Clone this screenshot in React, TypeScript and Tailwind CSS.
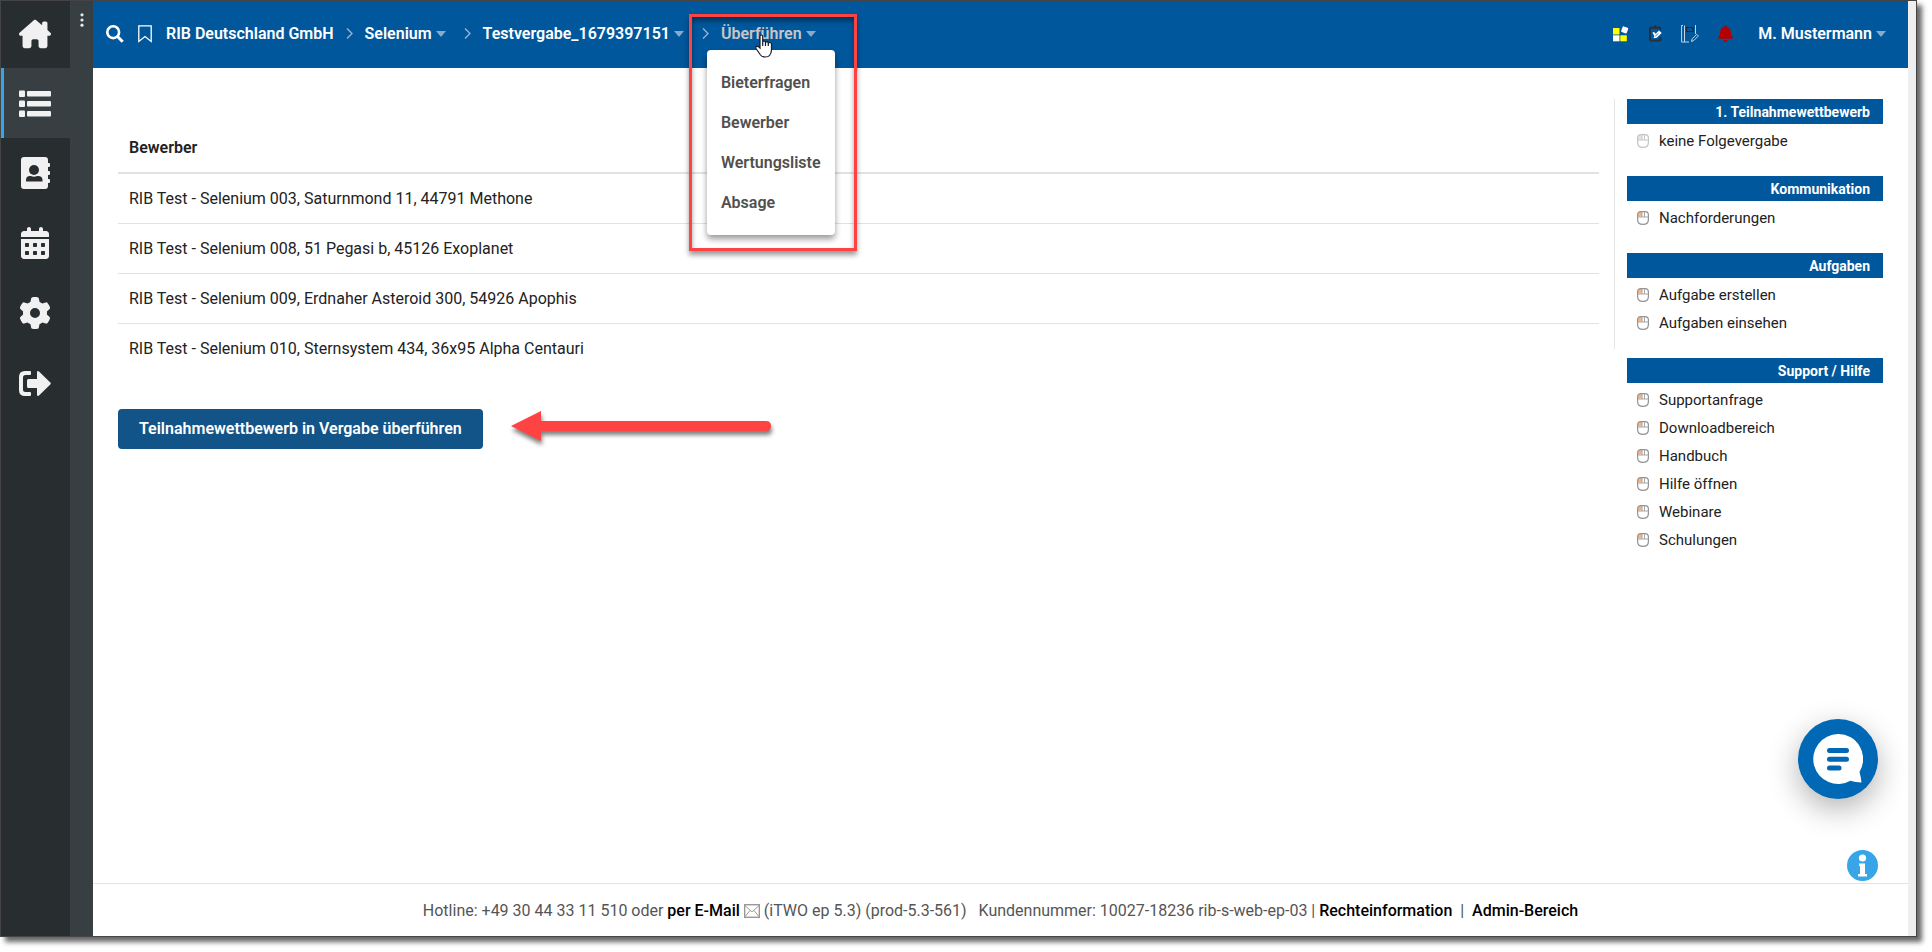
import type { ReactNode } from "react"
import {
  FaBell,
  FaHouseChimney,
  FaCalendarDays,
  FaGear,
} from "react-icons/fa6"

type LinkGroup = {
  title: string
  links: string[]
  muted?: boolean
}

const bidders = [
  "RIB Test - Selenium 003, Saturnmond 11, 44791 Methone",
  "RIB Test - Selenium 008, 51 Pegasi b, 45126 Exoplanet",
  "RIB Test - Selenium 009, Erdnaher Asteroid 300, 54926 Apophis",
  "RIB Test - Selenium 010, Sternsystem 434, 36x95 Alpha Centauri",
]

const menuItems = ["Bieterfragen", "Bewerber", "Wertungsliste", "Absage"]

const linkGroups: LinkGroup[] = [
  { title: "1. Teilnahmewettbewerb", links: ["keine Folgevergabe"], muted: true },
  { title: "Kommunikation", links: ["Nachforderungen"] },
  { title: "Aufgaben", links: ["Aufgabe erstellen", "Aufgaben einsehen"] },
  {
    title: "Support / Hilfe",
    links: [
      "Supportanfrage",
      "Downloadbereich",
      "Handbuch",
      "Hilfe öffnen",
      "Webinare",
      "Schulungen",
    ],
  },
]

function ListIcon() {
  return (
    <svg viewBox="0 0 32 28" className="h-7 w-8" fill="currentColor" aria-hidden="true">
      {[0, 10, 20].map((y) => (
        <g key={y}>
          <rect x="0" y={y + 0.5} width="6" height="6.5" rx="1" />
          <rect x="8" y={y + 1} width="24" height="5.5" rx="1" />
        </g>
      ))}
    </svg>
  )
}

function ContactIcon() {
  return (
    <svg viewBox="0 0 29 32" className="h-8 w-[29px]" aria-hidden="true">
      <rect width="27" height="32" rx="3" fill="currentColor" />
      <path d="M26 6h2q1 0 1 1v2q0 1-1 1h-2zM26 14h2q1 0 1 1v2q0 1-1 1h-2zM26 22h2q1 0 1 1v2q0 1-1 1h-2z" fill="currentColor" />
      <circle cx="13" cy="13" r="5" fill="#282d2f" />
      <path d="M5 24.5v-1.500q0-4 4-4h.8q3.200 1.400 6.400 0h.8q4.500 0 4.500 4v1.500z" fill="#282d2f" />
    </svg>
  )
}

function LogoutIcon() {
  return (
    <svg viewBox="0 0 32 25" className="h-[25px] w-8" fill="currentColor" aria-hidden="true">
      <path d="M11 0H6Q0 0 0 6v13q0 6 6 6h5q1 0 1-1v-2q0-1-1-1H6.500Q4 21 4 18.500v-12Q4 4 6.500 4H11q1 0 1-1V1q0-1-1-1z" />
      <path d="M18 1.300Q18 0 19 0q.6 0 1 .4l11.300 11.100q1 1 0 2L20 24.600q-.4.400-1 .4-1 0-1-1.300V17H9.500Q8 17 8 15.500v-6Q8 8 9.500 8H18z" />
    </svg>
  )
}

function Caret() {
  return (
    <svg viewBox="0 0 10 6" className="h-1.5 w-2.5" aria-hidden="true">
      <path d="M0 0h10L5 6z" fill="#86abd0" />
    </svg>
  )
}

function Separator() {
  return (
    <svg viewBox="0 0 7 11" className="h-[11px] w-[7px]" fill="none" aria-hidden="true">
      <path d="M1 .5l5 5-5 5" stroke="#8db0d2" strokeWidth="1.500" />
    </svg>
  )
}

function SearchIcon() {
  return (
    <svg viewBox="0 0 18 18" className="size-[18px]" fill="none" aria-hidden="true">
      <circle cx="7.200" cy="7.200" r="5.900" stroke="#fff" strokeWidth="2.600" />
      <path d="M11.500 11.500l5.200 5.200" stroke="#fff" strokeWidth="3" />
    </svg>
  )
}

function BookmarkIcon() {
  return (
    <svg viewBox="0 0 14 18" className="h-[18px] w-3.5" fill="none" aria-hidden="true">
      <path d="M.8.8h12.400v15.700L7 11.500.8 16.500z" stroke="#fff" strokeWidth="1.300" />
    </svg>
  )
}

function AppsIcon() {
  return (
    <svg viewBox="0 0 16 16" className="size-4" aria-hidden="true">
      <rect y="2" width="6.500" height="6.500" fill="#ff0" />
      <rect y="9.300" width="6.500" height="6" fill="#fff" />
      <rect x="7.300" y="9.300" width="6.500" height="6" fill="#ff0" />
      <rect x="8.700" y=".9" width="6" height="6" rx="1" fill="#fff" transform="rotate(20 11.700 3.900)" />
    </svg>
  )
}

function ClipboardIcon() {
  return (
    <svg viewBox="0 0 14 17" className="h-[17px] w-3.5" fill="none" aria-hidden="true">
      <path d="M4 2.500H2Q1 2.500 1 3.500V14.500Q1 15.500 2 15.500h8.500q1 0 1-1V12M8.500 2.500h2l1.500 2" stroke="#23303d" strokeWidth="1.900" />
      <path d="M3.500 4V2.500h1Q5 .3 6.300.3T8 2.500h1V4z" fill="#23303d" />
      <path d="M3.500 7.500L5 7l1.700 1.800L10 5.500l2.700 2.500-5 4.700-3 .6.500-2.600z" fill="#fff" />
      <path d="M6.200 11.500l2.800-3" stroke="#23303d" strokeWidth=".7" />
    </svg>
  )
}

function NotebookIcon() {
  return (
    <svg viewBox="0 0 18 18" className="size-[18px]" fill="none" stroke="#c3d5e6" aria-hidden="true">
      <path d="M.6.500v16.500M3.500.500v16.500M.5.500h1.500M.5 17H8M14.500 0v9" />
      <path d="M5.500 2.500h6.500v4H5.500z" stroke="#1d2c3b" strokeWidth="1.200" />
      <path d="M10.500 16.500l.7-2.600 4.600-4.600 1.600 1.600-4.600 4.600z" />
    </svg>
  )
}

function MouseIcon({ muted }: { muted?: boolean }) {
  return (
    <svg viewBox="0 0 12 14" className="h-3.5 w-3" fill="none" aria-hidden="true">
      <path d="M1 2.500Q1 1 2.500 1H5v4.500H1z" fill={muted ? "#e4e4e4" : "#ffb27a"} />
      <path d="M.6 4Q.6.6 4 .6h4q3.400 0 3.400 3.400v4.400q0 5-5.400 5t-5.400-5z" stroke={muted ? "#c4c4c4" : "#929292"} strokeWidth="1.200" />
      <path d="M.6 6h10.800M5 .6V6M7.500.6V6" stroke={muted ? "#c4c4c4" : "#a5a5a5"} />
    </svg>
  )
}

function MailIcon() {
  return (
    <svg viewBox="0 0 16 14" className="h-3.5 w-4" fill="none" stroke="#999" aria-hidden="true">
      <rect x=".7" y=".7" width="14.600" height="12.600" strokeWidth="1.400" />
      <path d="M1 1.500l7 6.500 7-6.500M1 12.500l5-6M15 12.500l-5-6" />
    </svg>
  )
}

function HandCursor() {
  return (
    <svg viewBox="0 0 18 24" className="pointer-events-none absolute top-[33px] left-[754px] z-30 h-6 w-[18px]" aria-hidden="true">
      <path
        d="M5 14V2.500Q5 1 6.300 1t1.400 1.500V8q.3-1 1.400-1t1.400 1.500q.3-.8 1.400-.8t1.400 1.500q.3-.7 1.400-.7 1.800 0 1.800 2V16q0 3-2 5.500-1 1.500-4.500 1.500-3 0-4.500-2L1 14.500Q.3 13 1.500 12.500T4 13z"
        fill="#fff"
        stroke="#1b1b2b"
        strokeWidth="1.200"
      />
      <path d="M7.700 8v4M10.500 8.500V12M13.300 9.500V12" stroke="#1b1b2b" strokeWidth="1.200" />
    </svg>
  )
}

function RailButton({
  label,
  active,
  children,
}: {
  label: string
  active?: boolean
  children: ReactNode
}) {
  return (
    <button
      type="button"
      aria-label={label}
      className={
        active
          ? "flex h-[70px] w-full items-center justify-center border-l-3 border-[#38a5e8] bg-[#373f42] pt-0.5 pr-1"
          : "flex h-[70px] w-full items-center justify-center pr-px"
      }
    >
      {children}
    </button>
  )
}

function Breadcrumb({ label, dropdown = true }: { label: string; dropdown?: boolean }) {
  return (
    <button type="button" className="flex items-center gap-1 font-semibold">
      {label}
      {dropdown && <Caret />}
    </button>
  )
}

function LinkPanel({ group }: { group: LinkGroup }) {
  return (
    <section>
      <h2 className="bg-[#00579c] px-[13px] pt-px text-right text-sm leading-6 font-bold text-white">
        {group.title}
      </h2>
      <ul className="pt-[3px]">
        {group.links.map((link) => (
          <li key={link}>
            <a href="#" className="flex h-7 items-center gap-2.5 pl-2.5 text-[15px]">
              <MouseIcon muted={group.muted} />
              {link}
            </a>
          </li>
        ))}
      </ul>
    </section>
  )
}

export default function App() {
  return (
    <div className="h-screen bg-white pr-[15px] pb-[15px] font-[Roboto,sans-serif] text-base text-[#222]">
      <div className="relative flex h-full border border-[#444] shadow-[5px_5px_5px_rgba(0,0,0,0.6)]">
        <nav className="flex w-[69px] shrink-0 flex-col bg-[#282d2f] text-[#f1f1f1]">
          <button type="button" aria-label="Startseite" className="flex h-[67px] items-center justify-center pr-px pb-0.5">
            <FaHouseChimney className="h-8 w-8" />
          </button>
          <RailButton label="Liste" active>
            <ListIcon />
          </RailButton>
          <RailButton label="Kontakte">
            <ContactIcon />
          </RailButton>
          <RailButton label="Kalender">
            <FaCalendarDays className="size-8" />
          </RailButton>
          <RailButton label="Einstellungen">
            <FaGear className="size-8" />
          </RailButton>
          <RailButton label="Abmelden">
            <LogoutIcon />
          </RailButton>
        </nav>

        <div className="flex w-[23px] shrink-0 justify-center bg-[#373f42] pt-3">
          <svg viewBox="0 0 4 14" className="h-3.5 w-1" fill="#e8e8e8" aria-hidden="true">
            <circle cx="2" cy="1.800" r="1.600" />
            <circle cx="2" cy="7" r="1.600" />
            <circle cx="2" cy="12.200" r="1.600" />
          </svg>
        </div>

        <div className="flex min-w-0 flex-1 flex-col">
          <header className="flex h-[67px] shrink-0 items-center justify-between bg-[#00579c] pr-[22px] pb-0.5 pl-[13px] text-white">
            <div className="flex items-center">
              <button type="button" aria-label="Suche" className="mr-3.5">
                <SearchIcon />
              </button>
              <button type="button" aria-label="Lesezeichen" className="mr-3.5">
                <BookmarkIcon />
              </button>
              <div className="flex items-center gap-3">
                <Breadcrumb label="RIB Deutschland GmbH" dropdown={false} />
                <Separator />
                <div className="pr-1.5">
                  <Breadcrumb label="Selenium" />
                </div>
                <Separator />
                <div className="pr-1.5">
                  <Breadcrumb label="Testvergabe_1679397151" />
                </div>
                <Separator />
                <div className="relative">
                  <div className="text-[#c6c6c6]">
                    <Breadcrumb label="Überführen" />
                  </div>
                  <ul className="absolute top-7 -left-3.5 z-10 rounded-sm bg-white pt-[13px] pb-3 shadow-[0_4px_6px_rgba(0,0,0,0.4)]">
                    {menuItems.map((item) => (
                      <li key={item}>
                        <a href="#" className="block px-3.5 leading-10 font-semibold text-[#505050]">
                          {item}
                        </a>
                      </li>
                    ))}
                  </ul>
                  <div className="pointer-events-none absolute -top-2 -left-8 z-20 h-[237px] w-[168px] border-3 border-[#ff4343] shadow-[0_4px_5px_rgba(0,0,0,0.4),inset_0_4px_5px_rgba(0,0,0,0.4)]" />
                </div>
              </div>
            </div>

            <div className="flex items-center">
              <button type="button" aria-label="Anwendungen" className="mr-5">
                <AppsIcon />
              </button>
              <button type="button" aria-label="Aufgaben" className="mr-[18px]">
                <ClipboardIcon />
              </button>
              <button type="button" aria-label="Notizen" className="mr-[18px]">
                <NotebookIcon />
              </button>
              <button type="button" aria-label="Benachrichtigungen" className="mr-6">
                <FaBell className="size-[17px] text-[#b50000]" />
              </button>
              <Breadcrumb label="M. Mustermann" />
            </div>
          </header>

          <main className="flex flex-1 items-start pt-[31px] pr-[25px] pl-[25px]">
            <div className="min-w-0 flex-1 pt-[22px]">
              <table className="w-full text-left">
                <thead>
                  <tr>
                    <th className="h-[52px] border-b-2 border-[#e2e2e2] px-[11px] pt-0.5 font-semibold">Bewerber</th>
                  </tr>
                </thead>
                <tbody>
                  {bidders.map((bidder) => (
                    <tr key={bidder} className="border-b border-[#e2e2e2] last:border-b-0">
                      <td className="h-[50px] px-[11px] pt-0.5">{bidder}</td>
                    </tr>
                  ))}
                </tbody>
              </table>
              <div className="mt-9 flex gap-7">
                <button type="button" className="h-10 rounded bg-[#125487] px-[21px] font-semibold text-white">
                  Teilnahmewettbewerb in Vergabe überführen
                </button>
                <svg viewBox="0 0 270 44" className="h-11 w-[270px] drop-shadow-[1px_4px_2px_rgba(0,0,0,0.5)]" fill="#ff4343" aria-hidden="true">
                  <path d="M0 17L30 2v10h225q5 0 5 5t-5 5H30v10z" />
                </svg>
              </div>
            </div>
            <div className="mr-3 ml-[15px] h-[250px] w-px shrink-0 bg-[#e6e6e6]" />
            <aside className="flex w-64 shrink-0 flex-col gap-[21px]">
              {linkGroups.map((group) => (
                <LinkPanel key={group.title} group={group} />
              ))}
            </aside>
          </main>

          <footer className="flex h-[53px] shrink-0 items-center justify-center border-t border-[#e2e2e2] pt-0.5 whitespace-pre text-[#555]">
            <span>Hotline: +49 30 44 33 11 510 oder </span>
            <a href="#" className="flex items-center gap-1 font-medium text-black">
              per E-Mail
              <MailIcon />
            </a>
            <span> (iTWO ep 5.3) (prod-5.3-561)   Kundennummer: 10027-18236 rib-s-web-ep-03 | </span>
            <a href="#" className="font-medium text-black">Rechteinformation</a>
            <span>  |  </span>
            <a href="#" className="font-medium text-black">Admin-Bereich</a>
          </footer>
        </div>

        <div className="w-2 shrink-0 bg-[#efefef]" />

        <button
          type="button"
          aria-label="Chat öffnen"
          className="absolute right-[38px] bottom-[137px] flex size-20 items-center justify-center rounded-full bg-[#0068b4] shadow-[0_10px_30px_rgba(0,0,0,0.3)]"
        >
          <svg viewBox="0 0 50 50" className="size-[50px]" aria-hidden="true">
            <path d="M25 0a25 25 0 1 0 12.500 46.800Q42 48.500 48.500 48.500 48 43 46.500 38A25 25 0 0 0 25 0z" fill="#fff" />
            <path d="M16.500 16.500h17M16.500 25.200h17M16.500 34h9.500" stroke="#0068b4" strokeWidth="5" strokeLinecap="round" />
          </svg>
        </button>
        <button
          type="button"
          aria-label="Information"
          className="absolute right-[38px] bottom-[55px] size-[31px]"
        >
          <svg viewBox="0 0 31 31" className="size-[31px]" aria-hidden="true">
            <circle cx="15.500" cy="15.500" r="15.500" fill="#38a5e8" />
            <circle cx="15.500" cy="8" r="3.600" fill="#fff" />
            <path d="M12 13.500h6V24h2v2.500h-9V24h2v-8h-1z" fill="#fff" />
          </svg>
        </button>
        <HandCursor />
      </div>
    </div>
  )
}
